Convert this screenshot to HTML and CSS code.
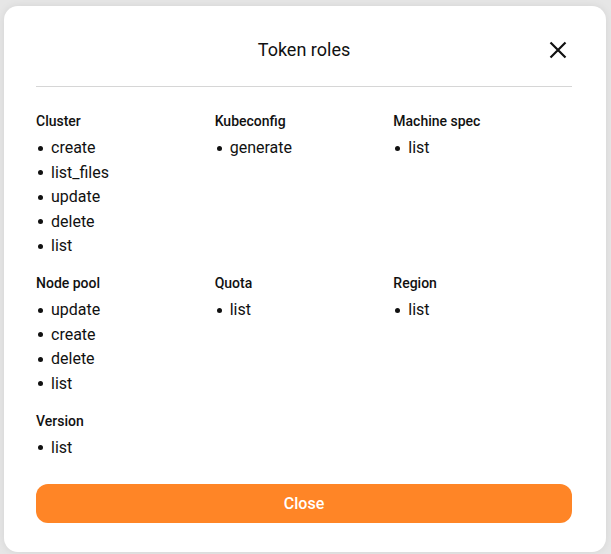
FILE: index.html
```html
<!DOCTYPE html>
<html lang="en">
<head>
<meta charset="utf-8">
<title>Token roles</title>
<link rel="stylesheet" href="styles.css">
</head>
<body>
<div class="modal">
  <div class="header">
    <h2 class="title">Token roles</h2>
    <button class="close-x" aria-label="Close">
      <svg width="20" height="20" viewBox="0 0 20 20"><path d="M2.5 2.5 L17.5 17.5 M17.5 2.5 L2.5 17.5" stroke="#111" stroke-width="2.2" fill="none"/></svg>
    </button>
  </div>
  <div class="divider"></div>
  <div class="roles">
    <div class="group">
      <div class="group-title">Cluster</div>
      <ul class="items">
        <li><span class="dot"></span>create</li>
        <li><span class="dot"></span>list_files</li>
        <li><span class="dot"></span>update</li>
        <li><span class="dot"></span>delete</li>
        <li><span class="dot"></span>list</li>
      </ul>
    </div>
    <div class="group">
      <div class="group-title">Kubeconfig</div>
      <ul class="items">
        <li><span class="dot"></span>generate</li>
      </ul>
    </div>
    <div class="group">
      <div class="group-title">Machine spec</div>
      <ul class="items">
        <li><span class="dot"></span>list</li>
      </ul>
    </div>
    <div class="group">
      <div class="group-title">Node pool</div>
      <ul class="items">
        <li><span class="dot"></span>update</li>
        <li><span class="dot"></span>create</li>
        <li><span class="dot"></span>delete</li>
        <li><span class="dot"></span>list</li>
      </ul>
    </div>
    <div class="group">
      <div class="group-title">Quota</div>
      <ul class="items">
        <li><span class="dot"></span>list</li>
      </ul>
    </div>
    <div class="group">
      <div class="group-title">Region</div>
      <ul class="items">
        <li><span class="dot"></span>list</li>
      </ul>
    </div>
    <div class="group">
      <div class="group-title">Version</div>
      <ul class="items">
        <li><span class="dot"></span>list</li>
      </ul>
    </div>
  </div>
  <button class="close-btn">Close</button>
</div>
</body>
</html>
```
FILE: styles.css
```css
html, body {
  margin: 0;
  padding: 0;
}
body {
  background: #e6e6e6;
  font-family: Roboto, "Liberation Sans", sans-serif;
  color: #111;
  padding: 6px 5px 2px 4px;
  height: 554px;
  box-sizing: border-box;
}
.modal {
  background: #fff;
  border-radius: 14px;
  box-shadow: 0 0 8px rgba(0,0,0,0.08);
  padding: 29px 34px 29px 32px;
  height: 546px;
  box-sizing: border-box;
}
.header {
  position: relative;
  height: 30px;
  display: flex;
  align-items: center;
  justify-content: center;
}
.title {
  margin: 0;
  font-size: 18px;
  font-weight: 400;
  line-height: 30px;
}
.close-x {
  position: absolute;
  right: 4px;
  top: 5px;
  border: 0;
  background: none;
  padding: 0;
  width: 20px;
  height: 20px;
  cursor: pointer;
}
.close-x svg { display: block; }
.divider {
  height: 1px;
  background: #d6d6d6;
  margin-top: 21px;
}
.roles {
  display: grid;
  grid-template-columns: repeat(3, 1fr);
  row-gap: 14.5px;
  margin-top: 24px;
}
.group-title {
  font-size: 14px;
  font-weight: 500;
  line-height: 20px;
}
.items {
  list-style: none;
  margin: 5px 0 0 0;
  padding: 0;
}
.items li {
  display: flex;
  align-items: center;
  font-size: 16px;
  line-height: 24.5px;
}
.dot {
  width: 5px;
  height: 5px;
  border-radius: 50%;
  background: #111;
  margin: 0 8px 0 2px;
  flex: none;
}
.close-btn {
  display: block;
  width: 100%;
  margin-top: 24px;
  height: 39px;
  border: 0;
  border-radius: 12px;
  background: #ff8526;
  color: #fff;
  font-family: Roboto, "Liberation Sans", sans-serif;
  font-size: 16px;
  font-weight: 500;
  cursor: pointer;
}
```
